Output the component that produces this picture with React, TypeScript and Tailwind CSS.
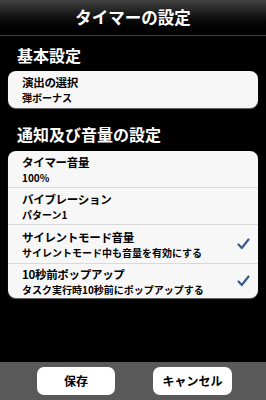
import { ReactNode } from "react";

const font = { fontFamily: '"Noto Sans CJK JP", "Noto Sans", sans-serif' };

function Check() {
  return (
    <svg width="13" height="12" viewBox="0 0 13 12" className="shrink-0">
      <path d="M1.5 6.5 L4.8 10 L11.5 1.5" fill="none" stroke="#3a5a94" strokeWidth="2.2" strokeLinecap="round" strokeLinejoin="round" />
    </svg>
  );
}

function Row({ title, sub, checked, h = "h-[36px]" }: { title: string; sub: string; checked?: boolean; h?: string }) {
  return (
    <div className={`${h} flex items-center pl-[14px] pr-[8px]`}>
      <div className="flex-1 flex flex-col gap-[3px]">
        <div className="text-[11.5px] leading-[13px] font-bold text-black tracking-[-0.3px]">{title}</div>
        <div className="text-[10px] leading-[11px] font-bold text-black">{sub}</div>
      </div>
      {checked && <Check />}
    </div>
  );
}

function Card({ children }: { children: ReactNode }) {
  return (
    <div className="mx-[8px] rounded-[8px] bg-[#f7f7f7] shadow-[0_1px_1px_rgba(120,120,120,0.9)] overflow-hidden">
      {children}
    </div>
  );
}

export default function App() {
  return (
    <div className="w-[266px] h-[400px] bg-black flex flex-col" style={font}>
      {/* Navigation bar */}
      <div className="h-[36px] shrink-0 bg-linear-to-b from-[#434343] via-[#111] to-black border-b border-[#3e3e3e] flex items-center justify-center">
        <span className="text-white text-[16.5px] font-bold leading-none">タイマーの設定</span>
      </div>

      <div className="h-[35px] pt-[7px] pl-[17px]">
        <span className="text-white text-[16px] font-bold leading-[20px]">基本設定</span>
      </div>
      <Card>
        <Row title="演出の選択" sub="弾ボーナス" h="h-[37px]" />
      </Card>

      <div className="h-[43px] pt-[14px] pl-[17px]">
        <span className="text-white text-[16px] font-bold leading-[20px]">通知及び音量の設定</span>
      </div>
      <Card>
        <Row title="タイマー音量" sub="100%" />
        <div className="h-px bg-[#d9d9d9]" />
        <Row title="バイブレーション" sub="パターン1" />
        <div className="h-px bg-[#d9d9d9]" />
        <Row title="サイレントモード音量" sub="サイレントモード中も音量を有効にする" checked h="h-[38px]" />
        <div className="h-px bg-[#d9d9d9]" />
        <Row title="10秒前ポップアップ" sub="タスク実行時10秒前にポップアップする" checked h="h-[34px]" />
      </Card>

      {/* Toolbar */}
      <div className="mt-auto h-[38px] bg-[#595959] flex items-center">
        <div className="flex w-full pl-[37px] gap-[38px]">
          <button className="w-[78px] h-[28px] rounded-[7px] bg-white text-[12px] font-bold text-black">保存</button>
          <button className="w-[79px] h-[28px] rounded-[7px] bg-white text-[12px] font-bold text-black">キャンセル</button>
        </div>
      </div>
    </div>
  );
}
